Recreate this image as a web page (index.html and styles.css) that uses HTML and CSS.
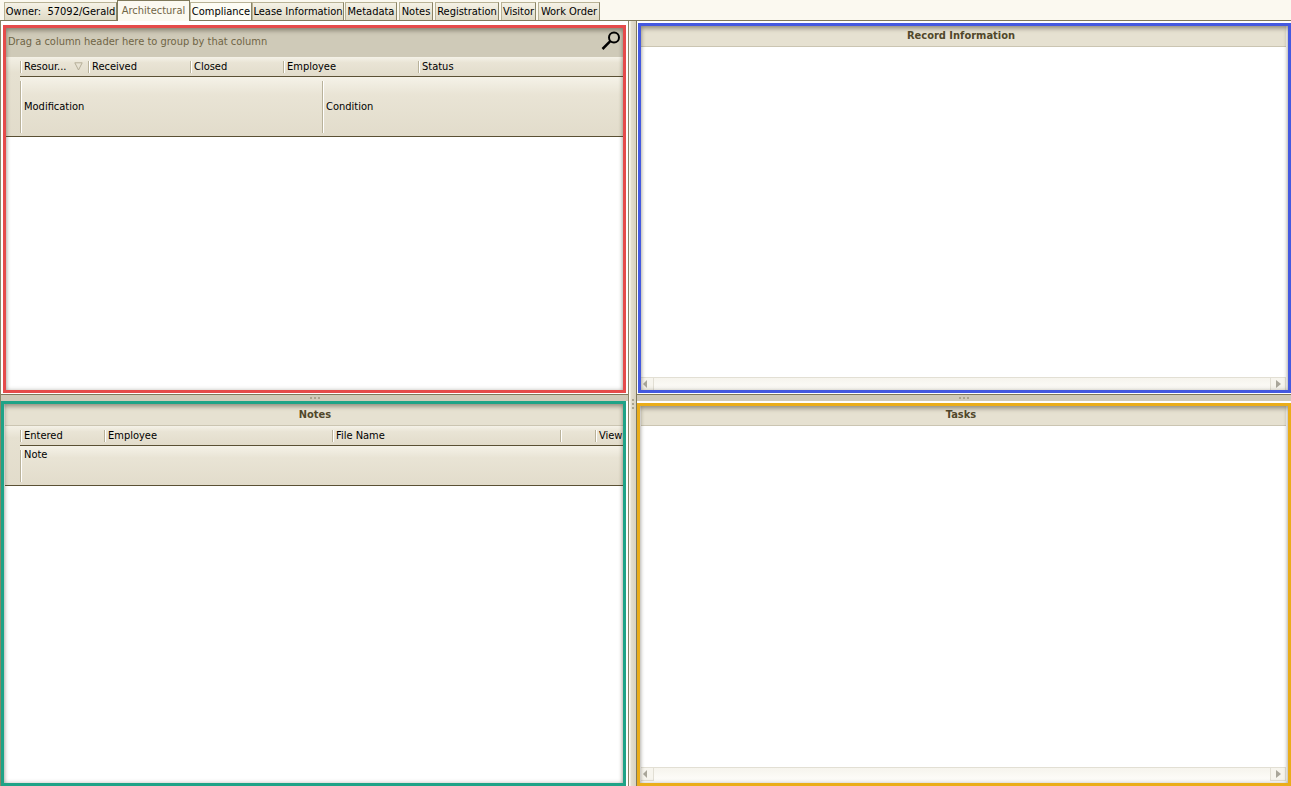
FILE: index.html
```html
<!DOCTYPE html>
<html lang="en">
<head>
<meta charset="utf-8">
<title>Owner: 57092/Gerald</title>
<link rel="stylesheet" href="styles.css">
</head>
<body>
<nav class="tabs" role="tablist">
  <button class="tab tab-owner" role="tab">Owner:&nbsp; 57092/Gerald</button>
  <button class="tab tab-active" role="tab" aria-selected="true">Architectural</button>
  <button class="tab tab-light" role="tab">Compliance</button>
  <button class="tab tab-lease" role="tab">Lease Information</button>
  <button class="tab tab-meta" role="tab">Metadata</button>
  <button class="tab tab-notes" role="tab">Notes</button>
  <button class="tab tab-reg" role="tab">Registration</button>
  <button class="tab tab-visitor" role="tab">Visitor</button>
  <button class="tab tab-work" role="tab">Work Order</button>
</nav>
<main class="workspace">
  <div class="side side-left">
    <section class="pane pane-top pane-records" aria-label="Architectural records">
      <div class="group-bar">
        <span>Drag a column header here to group by that column</span>
        <button class="search" aria-label="Search">
          <svg width="20" height="20" viewBox="0 0 20 20" fill="none" stroke="#000"><circle cx="13" cy="6.5" r="5" stroke-width="2"/><path d="M9.3 10.2 1.5 18" stroke-width="2.5"/></svg>
        </button>
      </div>
      <table class="grid">
        <colgroup><col class="w-mark"><col class="w-68"><col class="w-102"><col class="w-93"><col class="w-39"><col class="w-96"><col></colgroup>
        <thead>
          <tr class="row-short"><td class="mark" rowspan="2"></td><th><span class="sorted">Resour...<svg width="9" height="9" viewBox="0 0 9 9" fill="none" stroke="#b5ae98"><path d="M.8.8h7.4L4.5 8z"/></svg></span></th><th>Received</th><th>Closed</th><th colspan="2">Employee</th><th>Status</th></tr>
          <tr class="row-tall"><th colspan="4">Modification</th><th colspan="2">Condition</th></tr>
        </thead>
      </table>
    </section>
    <div class="split-h"><i></i><i></i><i></i></div>
    <section class="pane pane-notes">
      <h2 class="title">Notes</h2>
      <table class="grid">
        <colgroup><col class="w-mark"><col class="w-84"><col class="w-228"><col class="w-228"><col class="w-35"><col></colgroup>
        <thead>
          <tr class="row-short"><td class="mark" rowspan="2"></td><th>Entered</th><th>Employee</th><th>File Name</th><th></th><th>View</th></tr>
          <tr class="row-note"><th colspan="5">Note</th></tr>
        </thead>
      </table>
    </section>
  </div>
  <div class="split-v"><i></i><i></i><i></i></div>
  <div class="side side-right">
    <section class="pane pane-top pane-info">
      <h2 class="title">Record Information</h2>
      <div class="blank"></div>
      <div class="scroll"><button class="scroll-left" aria-label="Scroll left"><svg width="4" height="8" viewBox="0 0 4 8"><path d="M4 0v8L0 4z" fill="#a9a69a"/></svg></button><div class="track"></div><button class="scroll-right" aria-label="Scroll right"><svg width="5" height="8" viewBox="0 0 5 8"><path d="M0 0v8l5-4z" fill="#a9a69a"/></svg></button></div>
    </section>
    <div class="split-h"><i></i><i></i><i></i></div>
    <section class="pane pane-tasks">
      <h2 class="title">Tasks</h2>
      <div class="blank"></div>
      <div class="scroll"><button class="scroll-left" aria-label="Scroll left"><svg width="4" height="8" viewBox="0 0 4 8"><path d="M4 0v8L0 4z" fill="#a9a69a"/></svg></button><div class="track"></div><button class="scroll-right" aria-label="Scroll right"><svg width="5" height="8" viewBox="0 0 5 8"><path d="M0 0v8l5-4z" fill="#a9a69a"/></svg></button></div>
    </section>
  </div>
</main>
</body>
</html>
```
FILE: styles.css
```css
* { box-sizing: border-box; }
html, body { height: 100%; }
body {
  margin: 0;
  display: flex;
  flex-direction: column;
  overflow: hidden;
  background: #fbf9f0;
  color: #000;
  font: 11px/14px "DejaVu Sans Condensed", "Liberation Sans", sans-serif;
}
button { font: inherit; color: inherit; margin: 0; padding: 0; border: 0; background: none; }

.tabs {
  display: flex;
  align-items: flex-end;
  gap: 2px;
  height: 20px;
  padding-left: 4px;
}
.tab {
  flex: none;
  height: 18px;
  padding-top: 1px;
  white-space: nowrap;
  border: 1px solid #b9b396;
  border-right-color: #8b8567;
  border-bottom: 0;
  background: linear-gradient(#f5f2e6, #dfdac6);
}
.tab-owner { width: 113px; margin-right: -2px; }
.tab-active {
  position: relative;
  z-index: 1;
  width: 73px;
  height: 21px;
  margin-bottom: -1px;
  margin-right: -2px;
  padding-bottom: 1px;
  border-color: #7f795b;
  background: #fbf9f0;
  color: #706546;
}
.tab-light { width: 62px; margin-right: -2px; background: #fdfcf4; }
.tab-lease { width: 92px; margin-right: -1px; }
.tab-meta { width: 52px; }
.tab-notes { width: 34px; }
.tab-reg { width: 64px; }
.tab-visitor { width: 35px; }
.tab-work { width: 62px; }

.workspace {
  flex: 1;
  min-height: 0;
  display: grid;
  grid-template-columns: minmax(0, 628fr) 7px minmax(0, 655fr);
  border-top: 1px solid #7f795b;
  border-left: 1px solid #8b8567;
  background: #d6d0bd;
}
.side {
  display: grid;
  grid-template-rows: minmax(0, 374fr) 6px minmax(0, 385fr);
  min-width: 0;
  min-height: 0;
}
.side-left { border-right: 1px solid #8b8567; }
.side-right { border-left: 1px solid #7f795b; }
.pane {
  position: relative;
  display: flex;
  flex-direction: column;
  background: #fff;
}
.pane-top { border-bottom: 1px solid #7f795b; }
.pane::after {
  content: "";
  position: absolute;
  inset: 0;
  pointer-events: none;
  border: 3px solid;
  box-shadow: inset 0 3px 4px rgba(60, 55, 40, .35), inset 0 0 4px rgba(60, 55, 40, .3);
}
.pane-records { padding: 7px 3px 0 4px; }
.pane-records::after { inset: 4px 2px 1px; border-color: #e54b4b; }
.pane-info { padding: 2px 5px 3px 4px; }
.pane-info::after { inset: 2px 0 1px 1px; border-color: #4459e0; }
.pane-notes { padding: 3px 3px 0 4px; }
.pane-notes::after { inset: 0 2px 0 0; border-color: #1fa387; }
.pane-tasks { padding: 3px 5px 5px 4px; }
.pane-tasks::after { inset: 2px 0 0; border-color: #eaad1a; }

.group-bar {
  display: flex;
  align-items: center;
  justify-content: space-between;
  height: 29px;
  padding: 0 4px 3px 3px;
  background: #cfcab8;
  color: #706546;
}
.group-bar span { padding-top: 1px; }
.search { display: flex; }
.title {
  flex: none;
  height: 22px;
  margin: 0;
  border-bottom: 1px solid #cbc5b2;
  background: #e6e1d1;
  color: #51482b;
  font-size: 11px;
  line-height: 21px;
  text-align: center;
}
.pane-info .title { height: 24px; line-height: 25px; }
.side-right .title { padding-right: 5px; }
.blank { flex: 1; }

.grid { width: 100%; table-layout: fixed; border-collapse: separate; border-spacing: 0; }
.grid th, .grid td {
  padding: 0 0 0 4px;
  font-weight: normal;
  text-align: left;
  white-space: nowrap;
  border-bottom: 1px solid #5a5034;
  background:
    linear-gradient(90deg, #b9b29a 1px, #fff 1px) 0 50% / 2px calc(100% - 7px) no-repeat,
    linear-gradient(#f5f2e8, #e9e4d5 30%, #e2dccb);
}
.grid .mark { background: linear-gradient(#f3f0e5, #e6e1d1 20%, #e2dccb); }
.row-short th { height: 20px; }
.row-tall th { height: 60px; }
.grid .row-note th { height: 40px; padding-top: 2px; vertical-align: top; }
.sorted { display: flex; align-items: center; justify-content: space-between; padding-right: 5px; }
.w-mark { width: 15px; }
.w-35 { width: 35px; }
.w-39 { width: 39px; }
.w-68 { width: 68px; }
.w-84 { width: 84px; }
.w-93 { width: 93px; }
.w-96 { width: 96px; }
.w-102 { width: 102px; }
.w-228 { width: 228px; }

.split-h {
  display: flex;
  align-items: center;
  justify-content: center;
  gap: 2px;
  background: #d0cab9;
}
.split-v {
  display: flex;
  flex-direction: column;
  align-items: center;
  justify-content: center;
  gap: 2px;
  background: linear-gradient(90deg, #fbf9f0 1px, #e4dfcf 2px, #d8d2c0);
}
.split-h i, .split-v i { width: 2px; height: 2px; background: #aaa48f; }

.scroll { display: flex; flex: none; height: 14px; }
.scroll button {
  display: flex;
  align-items: center;
  justify-content: center;
  border: 1px solid #e2dfd4;
  background: #f7f5ee;
}
.scroll .scroll-left { width: 13px; padding-right: 4px; border-left: 0; }
.scroll .scroll-right { width: 16px; }
.track { flex: 1; border-top: 1px solid #e2dfd4; background: linear-gradient(#f6f4ed, #fefdfa); }
```
